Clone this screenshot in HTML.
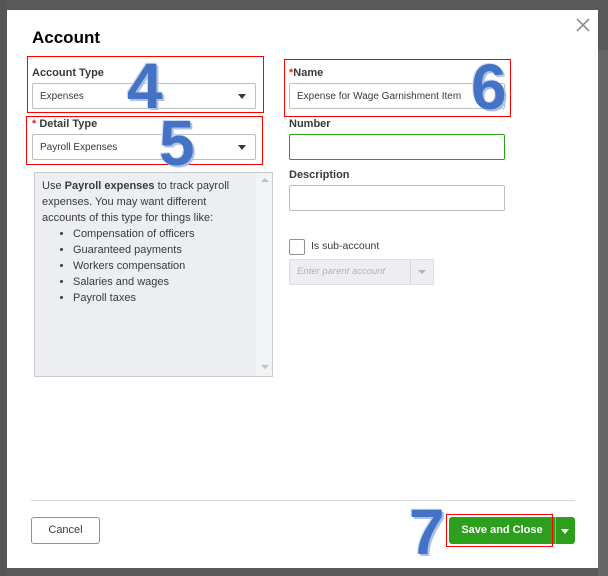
<!DOCTYPE html>
<html><head><style>
*{box-sizing:border-box;margin:0;padding:0}
body{width:608px;height:576px;background:#595959;position:relative;overflow:hidden;font-family:"Liberation Sans",sans-serif;color:#393a3d}
.a{position:absolute}
.modal{left:7px;top:10px;width:591px;height:558px;background:#fff}
.lbl{font-size:11px;font-weight:bold;color:#393a3d}
.inp{background:#fff;border:1px solid #babec5;border-radius:2px;font-size:10px;padding-left:7px;padding-top:2px;line-height:22px;color:#393a3d}
.red{border:1px solid #f00}
.car{position:absolute;right:9px;top:10px;width:0;height:0;border-left:4px solid transparent;border-right:4px solid transparent;border-top:5px solid #393a3d}
.num{font-size:64px;font-weight:bold;color:#4472c4;line-height:1;text-shadow:2px 2px 0 #a9c0e8,-1px -1px 0 #c9d7f0}
.ast{color:#e4261b}
</style></head><body>
<div class="a" style="left:0;top:0;width:7px;height:576px;background:#555"></div>
<div class="a" style="left:598px;top:50px;width:10px;height:526px;background:#666"></div>
<div class="a modal"></div>
<div class="a" style="left:32px;top:28px;font-size:17px;font-weight:bold;color:#000">Account</div>
<svg class="a" style="left:576px;top:18px" width="14" height="14"><path d="M1 1L13 13M13 1L1 13" stroke="#8d9096" stroke-width="1.6"/></svg>

<div class="a red" style="left:27px;top:56px;width:237px;height:57px"></div>
<div class="a lbl" style="left:32px;top:67px">Account Type</div>
<div class="a inp" style="left:32px;top:83px;width:224px;height:26px">Expenses<div class="car"></div></div>

<div class="a red" style="left:26px;top:116px;width:237px;height:49px"></div>
<div class="a lbl" style="left:32px;top:118px"><span class="ast">*</span> Detail Type</div>
<div class="a inp" style="left:32px;top:134px;width:224px;height:26px">Payroll Expenses<div class="car"></div></div>

<div class="a" style="left:34px;top:172px;width:239px;height:205px;background:#eceef1;border:1px solid #c9cbcf"></div>
<div class="a" style="left:256px;top:173px;width:16px;height:203px;background:#f2f3f5"></div>
<div class="a" style="left:261px;top:178px;border-left:4px solid transparent;border-right:4px solid transparent;border-bottom:4px solid #c0c0c0"></div>
<div class="a" style="left:261px;top:365px;border-left:4px solid transparent;border-right:4px solid transparent;border-top:4px solid #c0c0c0"></div>
<div class="a" style="left:42px;top:178px;font-size:11px;line-height:16px;width:200px">Use <b>Payroll expenses</b> to track payroll expenses. You may want different accounts of this type for things like:
<ul style="margin-left:31px;line-height:16px">
<li>Compensation of officers</li><li>Guaranteed payments</li><li>Workers compensation</li><li>Salaries and wages</li><li>Payroll taxes</li></ul></div>

<div class="a red" style="left:284px;top:59px;width:227px;height:58px"></div>
<div class="a lbl" style="left:289px;top:67px"><span class="ast">*</span>Name</div>
<div class="a inp" style="left:289px;top:83px;width:216px;height:26px">Expense for Wage Garnishment Item</div>
<div class="a lbl" style="left:289px;top:118px">Number</div>
<div class="a inp" style="left:289px;top:134px;width:216px;height:26px;border-color:#2ca01c"></div>
<div class="a lbl" style="left:289px;top:169px">Description</div>
<div class="a inp" style="left:289px;top:185px;width:216px;height:26px"></div>
<div class="a" style="left:289px;top:239px;width:16px;height:16px;border:1px solid #8d9096;border-radius:2px"></div>
<div class="a" style="left:311px;top:240px;font-size:10.5px">Is sub-account</div>
<div class="a" style="left:289px;top:259px;width:145px;height:26px;background:#eceef1;border:1px solid #dcdee2;border-radius:2px;font-size:9.5px;font-style:italic;color:#b0b3b8;padding-left:7px;line-height:24px">Enter parent account</div>
<div class="a" style="left:410px;top:260px;width:1px;height:24px;background:#d4d6da"></div>
<div class="a" style="left:418px;top:270px;border-left:4px solid transparent;border-right:4px solid transparent;border-top:4px solid #b0b3b8"></div>

<div class="a" style="left:31px;top:500px;width:544px;height:1px;background:#d4d7dc"></div>
<div class="a" style="left:31px;top:517px;width:69px;height:27px;border:1px solid #8d9096;border-radius:3px;font-size:11px;text-align:center;line-height:25px">Cancel</div>
<div class="a" style="left:449px;top:517px;width:126px;height:27px;background:#2ca01c;border-radius:3px"></div>
<div class="a" style="left:555px;top:517px;width:1px;height:27px;background:#fff;opacity:.4"></div>
<div class="a" style="left:449px;top:517px;width:106px;height:27px;color:#fff;font-size:11px;font-weight:bold;text-align:center;line-height:27px">Save and Close</div>
<div class="a" style="left:561px;top:529px;border-left:4px solid transparent;border-right:4px solid transparent;border-top:5px solid #fff"></div>
<div class="a red" style="left:446px;top:514px;width:107px;height:33px"></div>

<div class="a num" style="left:127px;top:54px">4</div>
<div class="a num" style="left:159px;top:111px">5</div>
<div class="a num" style="left:471px;top:55px">6</div>
<div class="a num" style="left:409px;top:500px">7</div>
</body></html>
